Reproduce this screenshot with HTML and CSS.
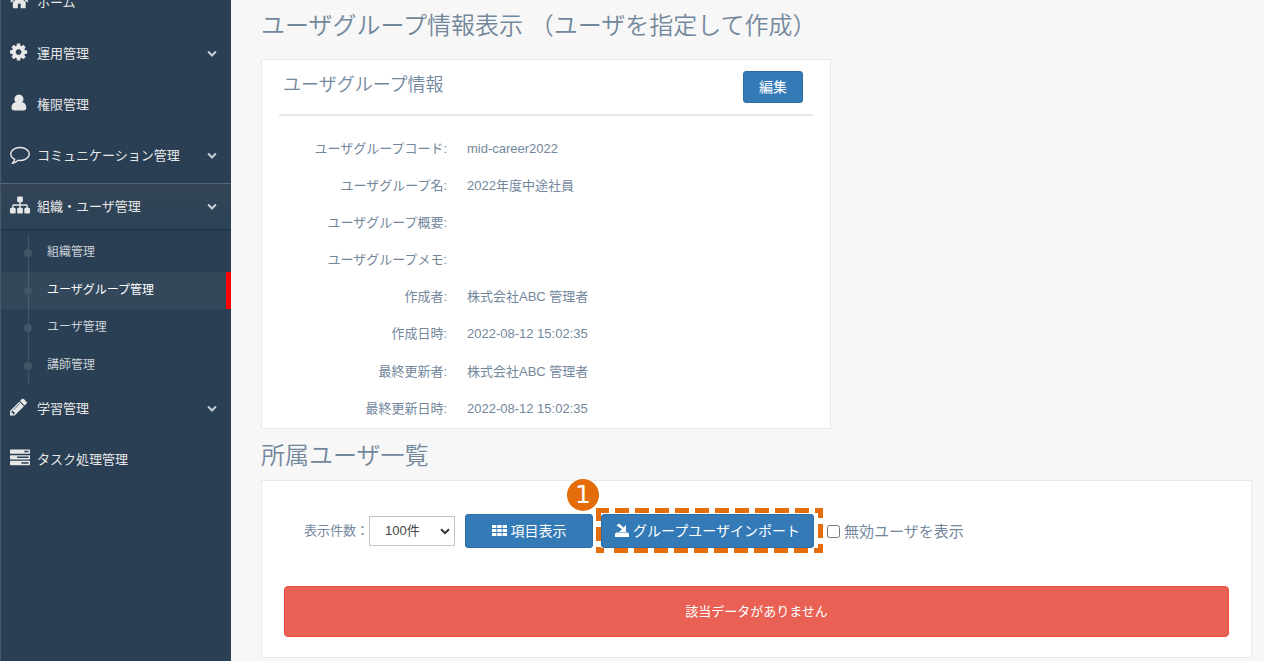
FILE: index.html
```
<!DOCTYPE html>
<html lang="ja">
<head>
    <meta charset="UTF-8">
    <title>ユーザグループ情報表示</title>
    <link rel="stylesheet" href="styles.css">
</head>
<body>
    <svg class="symbols" xmlns="http://www.w3.org/2000/svg">
        <symbol id="chevron" viewBox="0 0 1792 1792"><path d="M1683 808l-742 741q-19 19-45 19t-45-19l-742-741q-19-19-19-45.5t19-45.5l166-165q19-19 45-19t45 19l531 531 531-531q19-19 45-19t45 19l166 165q19 19 19 45.5t-19 45.5z"/></symbol>
    </svg>
    <div class="container">
        <nav class="sidebar">
            <ul class="side-menu">
                <li>
                    <a class="menu-link"><svg class="icon" viewBox="64 0 1792 1792"><path d="M1472 992v480q0 26-19 45t-45 19h-384v-384h-256v384h-384q-26 0-45-19t-19-45v-480q0-1 .5-3t.5-3l575-474 575 474q1 2 1 6zm223-69l-62 74q-8 9-21 11h-3q-13 0-21-7l-692-577-692 577q-12 8-24 7-13-2-21-11l-62-74q-8-10-7-23.5t11-21.5l719-599q32-26 76-26t76 26l244 204v-195q0-14 9-23t23-9h192q14 0 23 9t9 23v408l219 182q10 8 11 21.5t-7 23.5z"/></svg><span>ホーム</span></a>
                </li>
                <li>
                    <a class="menu-link"><svg class="icon" viewBox="128 0 1792 1792"><path d="M1152 896q0-106-75-181t-181-75-181 75-75 181 75 181 181 75 181-75 75-181zm512-109v222q0 12-8 23t-20 13l-185 28q-19 54-39 91 35 50 107 138 10 12 10 25t-9 23q-27 37-99 108t-94 71q-12 0-26-9l-138-108q-44 23-91 38-16 136-29 186-7 28-36 28h-222q-14 0-24.5-8.5t-11.5-21.5l-28-184q-49-16-90-37l-141 107q-10 9-25 9-14 0-25-11-126-114-165-168-7-10-7-23 0-12 8-23 15-21 51-66.5t54-70.5q-27-50-41-99l-183-27q-13-2-21-12.5t-8-23.5v-222q0-12 8-23t19-13l186-28q14-46 39-92-40-57-107-138-10-12-10-24 0-10 9-23 26-36 98.5-107.5t94.5-71.5q13 0 26 10l138 107q44-23 91-38 16-136 29-186 7-28 36-28h222q14 0 24.5 8.5t11.5 21.5l28 184q49 16 90 37l142-107q9-9 24-9 13 0 25 10 129 119 165 170 7 8 7 22 0 12-8 23-15 21-51 66.5t-54 70.5q26 50 41 98l183 28q13 2 21 12.5t8 23.5z"/></svg><span>運用管理</span><svg class="chevron"><use href="#chevron"/></svg></a>
                </li>
                <li>
                    <a class="menu-link"><svg class="icon" viewBox="0 0 20 20"><path d="M9 1.500a4.500 4.500 0 0 1 3.200 7.700c2.600.3 4.100 2.300 4.100 5.300 0 1.900-1 3-2.800 3H4.300c-1.800 0-2.800-1.100-2.800-3 0-3 1.500-5 4.200-5.300A4.500 4.500 0 0 1 9 1.500z"/></svg><span>権限管理</span></a>
                </li>
                <li>
                    <a class="menu-link"><svg class="icon" viewBox="0 0 1792 1792"><path d="M896 384q-204 0-381.5 69.5t-282 187.5-104.5 255q0 112 71.5 213.5t201.5 175.5l87 50-27 96q-24 91-70 172 152-63 275-171l43-38 57 6q69 8 130 8 204 0 381.5-69.5t282-187.5 104.5-255-104.5-255-282-187.5-381.5-69.5zm896 512q0 174-120 321.5t-326 233-450 85.5q-70 0-145-8-198 175-460 242-49 14-114 22h-5q-15 0-27-10.5t-16-27.5v-1q-3-4-.5-12t2-10 4.5-9.5l6-9 7-8.500 8-9q7-8 31-34.5t34.5-38 31-39.5 32.5-51 27-59 26-76q-157-89-247.5-220t-90.5-281q0-174 120-321.5t326-233 450-85.500 450 85.500 326 233 120 321.5z"/></svg><span>コミュニケーション管理</span><svg class="chevron"><use href="#chevron"/></svg></a>
                </li>
                <li class="active">
                    <a class="menu-link"><svg class="icon" viewBox="0 0 1792 1792"><path d="M1792 1248v320q0 40-28 68t-68 28h-320q-40 0-68-28t-28-68v-320q0-40 28-68t68-28h96v-192h-512v192h96q40 0 68 28t28 68v320q0 40-28 68t-68 28h-320q-40 0-68-28t-28-68v-320q0-40 28-68t68-28h96v-192h-512v192h96q40 0 68 28t28 68v320q0 40-28 68t-68 28h-320q-40 0-68-28t-28-68v-320q0-40 28-68t68-28h96v-192q0-52 38-90t90-38h512v-192h-96q-40 0-68-28t-28-68v-320q0-40 28-68t68-28h320q40 0 68 28t28 68v320q0 40-28 68t-68 28h-96v192h512q52 0 90 38t38 90v192h96q40 0 68 28t28 68z"/></svg><span>組織・ユーザ管理</span><svg class="chevron"><use href="#chevron"/></svg></a>
                    <ul class="child-menu">
                        <li>組織管理</li>
                        <li class="current">ユーザグループ管理</li>
                        <li>ユーザ管理</li>
                        <li>講師管理</li>
                    </ul>
                </li>
                <li>
                    <a class="menu-link"><svg class="icon" viewBox="128 0 1792 1792"><path d="M491 1536l91-91-235-235-91 91v107h128v128h107zm523-928q0-22-22-22-10 0-17 7l-542 542q-7 7-7 17 0 22 22 22 10 0 17-7l542-542q7-7 7-17zm-54-192l416 416-832 832h-416v-416zm683 96q0 53-37 90l-166 166-416-416 166-165q36-38 90-38 53 0 91 38l235 234q37 39 37 91z"/></svg><span>学習管理</span><svg class="chevron"><use href="#chevron"/></svg></a>
                </li>
                <li>
                    <a class="menu-link"><svg class="icon" viewBox="0 0 1792 1792"><path fill-rule="evenodd" d="M64 128h1664q64 0 64 64v256q0 64-64 64H64q-64 0-64-64V192q0-64 64-64zM64 640h1664q64 0 64 64v256q0 64-64 64H64q-64 0-64-64V704q0-64 64-64zM64 1152h1664q64 0 64 64v256q0 64-64 64H64q-64 0-64-64v-256q0-64 64-64zM1280 256h384v128h-384zM640 768h1024v128H640zM1024 1280h640v128h-640z"/></svg><span>タスク処理管理</span></a>
                </li>
            </ul>
        </nav>

        <main class="content">
            <h3 class="page-title">ユーザグループ情報表示 （ユーザを指定して作成）</h3>
            <section class="panel info-panel">
                <div class="panel-head">
                    <h2>ユーザグループ情報</h2>
                    <button class="btn btn-edit">編集</button>
                </div>
                <dl class="info">
                    <dt>ユーザグループコード:</dt><dd>mid-career2022</dd>
                    <dt>ユーザグループ名:</dt><dd>2022年度中途社員</dd>
                    <dt>ユーザグループ概要:</dt><dd></dd>
                    <dt>ユーザグループメモ:</dt><dd></dd>
                    <dt>作成者:</dt><dd>株式会社ABC 管理者</dd>
                    <dt>作成日時:</dt><dd>2022-08-12 15:02:35</dd>
                    <dt>最終更新者:</dt><dd>株式会社ABC 管理者</dd>
                    <dt>最終更新日時:</dt><dd>2022-08-12 15:02:35</dd>
                </dl>
            </section>

            <h3 class="list-title">所属ユーザ一覧</h3>
            <section class="panel list-panel">
                <div class="toolbar">
                    <span class="count-label">表示件数：</span>
                    <div class="select">100件<svg viewBox="0 0 10 7"><path d="M1 1.200l4 4 4-4" fill="none" stroke="#333" stroke-width="2"/></svg></div>
                    <button class="btn btn-columns">
                        <svg viewBox="0 0 15 11"><path d="M0 0h4.400v3H0zM5.300 0h4.400v3H5.300zM10.600 0H15v3h-4.400zM0 4h4.400v3H0zM5.300 4h4.400v3H5.300zM10.600 4H15v3h-4.400zM0 8h4.400v3H0zM5.300 8h4.400v3H5.300zM10.600 8H15v3h-4.400z"/></svg>項目表示
                    </button>
                    <div class="import-wrap">
                        <button class="btn btn-import">
                            <svg viewBox="0 0 14 14"><path d="M1 9.500h12l1 1.500v3H0v-3zM1.500 2.500L4 .5l4.500 4L11 2v7H4l3-2.800z"/></svg>グループユーザインポート
                        </button>
                        <svg class="marker" viewBox="0 0 227 45">
                            <path class="dashes" d="M-1 2.500H227M2.500 -1V45M224.500 -4V45M18 42.500H227"/>
                            <path d="M0 42.500H8"/>
                        </svg>
                        <span class="step">1</span>
                    </div>
                    <label class="check"><input type="checkbox"><span>無効ユーザを表示</span></label>
                </div>
                <div class="alert">該当データがありません</div>
            </section>
        </main>
    </div>
</body>
</html>
```
FILE: styles.css
```
* {
    box-sizing: border-box;
}

body {
    margin: 0;
    height: 661px;
    overflow: hidden;
    background: #f7f7f7;
    color: #73879c;
    font-family: "Liberation Sans", "Noto Sans CJK JP", sans-serif;
    font-size: 13px;
    line-height: 1.471;
}

ul, dl, dd, h2, h3 {
    margin: 0;
    padding: 0;
    list-style: none;
}

h2, h3 {
    font-weight: 350;
}

.symbols {
    display: none;
}

.container {
    display: flex;
    height: 661px;
}

/* sidebar */
.sidebar {
    flex: 0 0 231px;
    background: #2a3f54;
    border-left: 1px solid #465a6c;
    overflow: hidden;
}

.side-menu {
    margin-top: -21px;
}

.menu-link {
    display: flex;
    align-items: center;
    height: 46px;
    margin-bottom: 5px;
    padding: 0 14px 0 9px;
    color: #e7e7e7;
}

.menu-link span {
    padding-top: 1px;
}

.icon {
    width: 20px;
    height: 20px;
    margin: 0 7px 3px 0;
    fill: #e7e7e7;
}

.chevron {
    width: 10px;
    height: 10px;
    margin: 0 0 1px auto;
    fill: #c4cfda;
}

.active .menu-link {
    height: 47px;
    margin-bottom: 4px;
    padding-bottom: 1px;
    border-top: 1px solid #536576;
    border-bottom: 1px solid #1d2f41;
    background: linear-gradient(#334556, #2c4257);
}

.child-menu {
    padding-bottom: 1px;
    background: linear-gradient(#425668, #425668) 27px 1px / 1px 150px no-repeat;
}

.child-menu li {
    display: flex;
    align-items: center;
    height: 37.5px;
    padding-top: 1px;
    color: #c9d0d6;
    font-size: 12px;
}

.child-menu li::before {
    content: "";
    width: 8px;
    height: 8px;
    margin: 0 15px 0 23px;
    border-radius: 50%;
    background: #425668;
}

.child-menu .current {
    border-right: 5px solid #f00;
    background: rgba(255, 255, 255, 0.05);
    color: #fff;
}

/* content */
.content {
    flex: 1;
    padding: 0 12px 0 30px;
}

.page-title, .list-title {
    font-size: 24px;
}

.page-title {
    height: 59px;
    line-height: 52px;
}

.list-title {
    height: 51px;
    line-height: 53px;
}

.panel {
    border: 1px solid #e6e9ed;
    background: #fff;
}

.info-panel {
    width: 570px;
    height: 370px;
    padding: 0 17px;
}

.panel-head {
    display: flex;
    justify-content: space-between;
    align-items: flex-start;
    height: 56px;
    padding: 11px 10px 0 4px;
    border-bottom: 2px solid #e6e9ed;
}

.panel-head h2 {
    font-size: 18px;
    line-height: 28px;
}

.btn {
    display: flex;
    align-items: center;
    justify-content: center;
    padding: 0 0 2px;
    border: 1px solid #2e6da4;
    border-radius: 3px;
    background: #337ab7;
    color: #fff;
    font-family: inherit;
    font-size: 14px;
}

.btn svg {
    fill: #fff;
    margin-right: 4px;
}

.btn-edit {
    width: 60px;
    height: 32px;
}

.info {
    display: grid;
    grid-template-columns: 168px 1fr;
    grid-auto-rows: 37.2px;
    align-items: center;
    column-gap: 20px;
    padding-top: 13.5px;
}

.info dt {
    text-align: right;
}

.list-panel {
    height: 178px;
    padding: 33px 22px 0;
}

.toolbar {
    display: flex;
    align-items: center;
    height: 34px;
    padding-left: 20px;
}

.select {
    display: flex;
    align-items: center;
    justify-content: space-between;
    width: 86px;
    height: 30px;
    padding: 0 4px 0 15px;
    border: 1px solid #c4c4c4;
    color: #444;
}

.select svg {
    width: 10px;
    height: 7px;
}

.btn-columns {
    width: 128px;
    height: 34px;
    margin: 0 8px 0 10px;
}

.btn-columns svg {
    width: 15px;
    height: 11px;
}

.import-wrap {
    position: relative;
}

.btn-import {
    width: 213px;
    height: 34px;
}

.btn-import svg {
    width: 14px;
    height: 14px;
}

/* orange callout over the import button */
.marker {
    position: absolute;
    left: -5px;
    top: -6px;
    width: 227px;
    height: 45px;
    fill: none;
    stroke: #e46c0a;
    stroke-width: 5;
}

.dashes {
    stroke-dasharray: 14 6;
}

.step {
    position: absolute;
    left: -34px;
    top: -35px;
    width: 32px;
    height: 32px;
    border-radius: 50%;
    background: #e46c0a;
    color: #fff;
    font-family: "DejaVu Sans", sans-serif;
    font-size: 25px;
    line-height: 31px;
    text-align: center;
}

.check {
    display: flex;
    align-items: center;
    margin-left: 13px;
    font-size: 15px;
}

.check span {
    padding-top: 2px;
}

.check input {
    width: 13px;
    height: 13px;
    margin: 0 4px 0 0;
}

.alert {
    height: 51px;
    margin-top: 38px;
    border: 1px solid #e74c3c;
    border-radius: 4px;
    background: #e96154;
    color: #fff;
    line-height: 49px;
    text-align: center;
}
```
